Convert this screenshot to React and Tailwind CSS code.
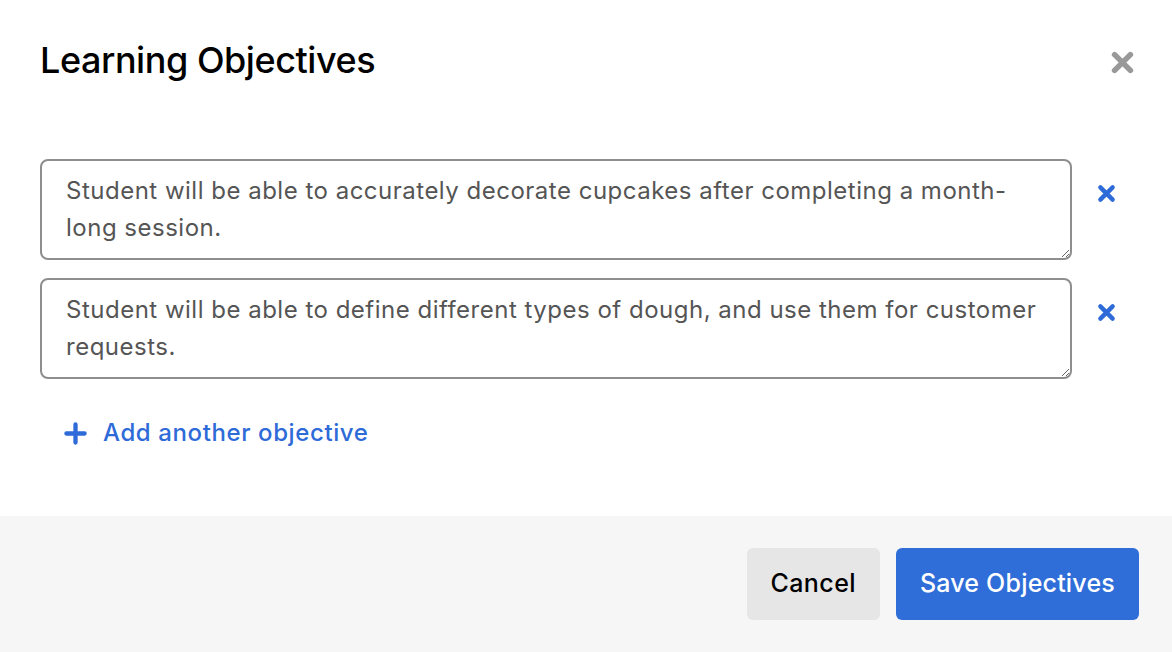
import { useState } from 'react'

const initialObjectives = [
  'Student will be able to accurately decorate cupcakes after completing a month-long session.',
  'Student will be able to define different types of dough, and use them for customer requests.',
]

function XIcon({ className }) {
  return (
    <svg viewBox="0 0 24 24" className={className} fill="none" stroke="currentColor" strokeWidth="5" strokeLinecap="round">
      <path d="M5 5 L19 19 M19 5 L5 19" />
    </svg>
  )
}

function PlusIcon({ className }) {
  return (
    <svg viewBox="0 0 24 24" className={className} fill="none" stroke="currentColor" strokeWidth="4.5" strokeLinecap="round">
      <path d="M12 2.5 V21.5 M2.5 12 H21.5" />
    </svg>
  )
}

export default function App() {
  const [objectives, setObjectives] = useState(initialObjectives)

  const update = (i, value) => {
    setObjectives(objectives.map((o, j) => (j === i ? value : o)))
  }

  return (
    <div className="w-[1172px] h-[652px] bg-white flex flex-col" style={{ fontFamily: 'Inter, "Noto Sans", sans-serif' }}>
      {/* Header */}
      <div className="flex items-start justify-between pl-10 pr-[36px] pt-[37px]">
        <h1 className="text-[36px] leading-[46px] font-medium text-black tracking-[-0.45px]">Learning Objectives</h1>
        <button className="mt-[12px] text-[#999999]">
          <XIcon className="w-[27px] h-[27px]" />
        </button>
      </div>

      {/* Objectives */}
      <div className="flex-1 pl-10 pt-[76px]">
        <div className="flex flex-col gap-[18px]">
          {objectives.map((text, i) => (
            <div key={i} className="flex items-start">
              <textarea
                value={text}
                onChange={(e) => update(i, e.target.value)}
                className="w-[1032px] h-[101px] border-2 border-[#8e8e8e] rounded-lg px-6 pt-[11px] pb-3 text-[24px] leading-[37px] tracking-[0.5px] text-[#555555] outline-none"
                style={{ fontFamily: 'Inter, "Noto Sans", sans-serif' }}
              />
              <button className="ml-[24px] mt-[24px] text-[#2e6bd8]">
                <XIcon className="w-[21px] h-[21px]" />
              </button>
            </div>
          ))}
        </div>
        <button className="flex items-center gap-4 mt-[38px] ml-[24px] text-[#2e6bd8]">
          <PlusIcon className="w-[23px] h-[23px]" />
          <span className="text-[24px] leading-[32px] font-medium tracking-[0.6px]">Add another objective</span>
        </button>
      </div>

      {/* Footer */}
      <div className="h-[136px] bg-[#f6f6f6] flex items-start justify-end gap-4 pt-8 pr-[33px]">
        <button className="h-[72px] px-6 rounded-md bg-[#e6e6e6] text-black text-[25px] font-medium tracking-[0.4px]">Cancel</button>
        <button className="h-[72px] px-6 rounded-md bg-[#2f6dd8] text-white text-[25px] font-medium tracking-[0.2px]">Save Objectives</button>
      </div>
    </div>
  )
}
